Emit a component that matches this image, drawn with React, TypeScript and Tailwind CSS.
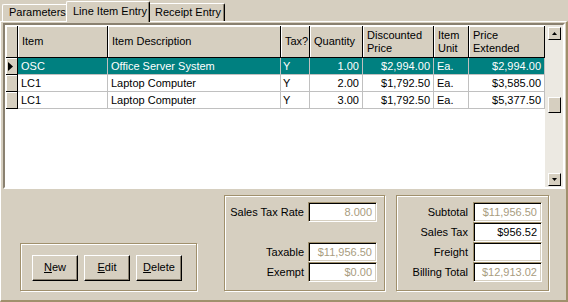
import React from 'react';

const rows = [
  { item: 'OSC', desc: 'Office Server System', tax: 'Y', qty: '1.00', price: '$2,994.00', unit: 'Ea.', ext: '$2,994.00' },
  { item: 'LC1', desc: 'Laptop Computer', tax: 'Y', qty: '2.00', price: '$1,792.50', unit: 'Ea.', ext: '$3,585.00' },
  { item: 'LC1', desc: 'Laptop Computer', tax: 'Y', qty: '3.00', price: '$1,792.50', unit: 'Ea.', ext: '$5,377.50' },
];

const hdrCell = 'h-full flex items-center pl-[4px] leading-[13px] border-r border-b border-black shadow-[inset_1px_1px_0_#fff] bg-[#d6cfc0]';
const cell = 'h-[17px] flex items-center px-[3px] border-r border-b border-[#c0c0c0] whitespace-nowrap';

const Field: React.FC<{ value?: string; disabled?: boolean }> = ({ value, disabled }) => (
  <div
    className={`w-[69px] h-[20px] bg-white flex items-center justify-end pr-[4px] border border-t-[#a0906c] border-l-[#a0906c] border-r-white border-b-white shadow-[inset_1px_1px_0_#000,inset_-1px_-1px_0_#d6cfc0] ${
      disabled ? 'text-[#a89c80]' : 'text-black'
    }`}
  >
    {value}
  </div>
);

const Btn: React.FC<{ k: string; rest: string }> = ({ k, rest }) => (
  <div className="w-[46px] h-[26px] flex items-center justify-center border border-t-white border-l-white border-r-black border-b-black shadow-[inset_-1px_-1px_0_#8a8170]">
    <span>
      <span className="underline">{k}</span>
      {rest}
    </span>
  </div>
);

const ArrowUp = () => (
  <svg width="5" height="3" viewBox="0 0 5 3"><path d="M2.5 0 L5 3 L0 3 Z" fill="#000" /></svg>
);
const ArrowDown = () => (
  <svg width="5" height="3" viewBox="0 0 5 3"><path d="M0 0 L5 0 L2.5 3 Z" fill="#000" /></svg>
);

const App: React.FC = () => {
  return (
    <div className="w-[568px] h-[302px] bg-[#d6cfc0] text-[11px] text-black overflow-hidden flex flex-col font-['Liberation_Sans',Arial,sans-serif]">
      {/* tabs */}
      <div className="h-[21px] flex items-end pl-[2px] shrink-0">
        <div className="w-[64px] h-[17px] border-t border-l border-white rounded-tl-[2px] pl-[6px] leading-[14px]">Parameters</div>
        <div className="relative z-10 -mb-px w-[84px] h-[21px] bg-[#d6cfc0] border-t border-l border-white border-r border-r-black rounded-t-[2px] pl-[6px] pt-[2px] leading-[14px] shadow-[inset_-1px_0_0_#8a8170]">
          Line Item Entry
        </div>
        <div className="w-[75px] h-[18px] border-t border-white border-r border-r-black rounded-tr-[2px] pl-[5px] pt-[1px] leading-[14px] shadow-[inset_-1px_0_0_#8a8170]">
          Receipt Entry
        </div>
      </div>

      {/* panel */}
      <div className="flex-1 flex flex-col border-t border-l border-white border-r-2 border-b-2 border-r-[#a0906c] border-b-[#a0906c] shadow-[1px_1px_0_#6b5e45]">
        {/* grid */}
        <div className="ml-[2px] mt-[1px] w-[562px] h-[166px] flex border-2 border-t-[#8a8170] border-l-[#8a8170] border-r-white border-b-white shadow-[inset_1px_1px_0_#000]">
          <div className="flex-1 bg-white pt-[1px] pl-[1px]">
            {/* header */}
            <div className="flex h-[32px]">
              <div className={`w-[12px] ${hdrCell}`} />
              <div className={`w-[90px] ${hdrCell}`}>Item</div>
              <div className={`w-[173px] ${hdrCell}`}>Item Description</div>
              <div className={`w-[29px] ${hdrCell} pl-[1px]`}>Tax?</div>
              <div className={`w-[53px] ${hdrCell} pl-[3px]`}>Quantity</div>
              <div className={`w-[71px] ${hdrCell}`}>Discounted<br />Price</div>
              <div className={`w-[35px] ${hdrCell} pl-[3px]`}>Item<br />Unit</div>
              <div className={`w-[76px] ${hdrCell}`}>Price<br />Extended</div>
            </div>
            {rows.map((r, i) => {
              const sel = i === 0;
              return (
                <div key={i} className={`flex ${sel ? 'bg-[#008080] text-white' : ''}`}>
                  <div className="w-[12px] h-[17px] bg-[#d6cfc0] text-black border-r border-b border-black shadow-[inset_1px_1px_0_#fff] flex items-center pl-[2px]">
                    {sel && (
                      <svg width="5" height="9" viewBox="0 0 5 9"><path d="M0 0 L5 4.5 L0 9 Z" fill="#000" /></svg>
                    )}
                  </div>
                  <div className={`w-[90px] ${cell}`}>{r.item}</div>
                  <div className={`w-[173px] ${cell}`}>{r.desc}</div>
                  <div className={`w-[29px] ${cell} pl-[2px]`}>{r.tax}</div>
                  <div className={`w-[53px] ${cell} justify-end`}>{r.qty}</div>
                  <div className={`w-[71px] ${cell} justify-end`}>{r.price}</div>
                  <div className={`w-[35px] ${cell}`}>{r.unit}</div>
                  <div className={`w-[76px] ${cell} justify-end`}>{r.ext}</div>
                </div>
              );
            })}
          </div>
          {/* scrollbar */}
          <div className="w-[18px] bg-[#ece9e2] flex flex-col pl-[3px] pt-[2px] pb-[1px]">
            <div className="w-[13px] h-[13px] bg-[#d6cfc0] flex items-center justify-center border border-t-white border-l-white border-r-black border-b-black">
              <ArrowUp />
            </div>
            <div className="mt-[57px] w-[13px] h-[16px] bg-[#d6cfc0] border border-t-white border-l-white border-r-black border-b-black" />
            <div className="mt-auto w-[13px] h-[13px] bg-[#d6cfc0] flex items-center justify-center border border-t-white border-l-white border-r-black border-b-black">
              <ArrowDown />
            </div>
          </div>
        </div>

        {/* bottom */}
        <div className="flex items-end pt-[6px] pl-[19px]">
          <div className="w-[177px] h-[48px] border border-[#a0906c] shadow-[inset_1px_1px_0_#fff,1px_1px_0_#fff] flex items-center gap-[6px] pl-[11px] pt-[1px]">
            <Btn k="N" rest="ew" />
            <Btn k="E" rest="dit" />
            <Btn k="D" rest="elete" />
          </div>

          <div className="ml-[27px] w-[161px] h-[96px] border border-[#a0906c] shadow-[inset_1px_1px_0_#fff,1px_1px_0_#fff] flex flex-col pt-[6px] pr-[7px]">
            <div className="flex items-center justify-end gap-[4px]">
              <span>Sales Tax Rate</span>
              <Field value="8.000" disabled />
            </div>
            <div className="mt-[20px] flex items-center justify-end gap-[4px]">
              <span>Taxable</span>
              <Field value="$11,956.50" disabled />
            </div>
            <div className="flex items-center justify-end gap-[4px]">
              <span>Exempt</span>
              <Field value="$0.00" disabled />
            </div>
          </div>

          <div className="ml-[11px] w-[153px] h-[96px] border border-[#a0906c] shadow-[inset_1px_1px_0_#fff,1px_1px_0_#fff] flex flex-col pt-[6px] pr-[6px]">
            <div className="flex items-center justify-end gap-[5px]">
              <span>Subtotal</span>
              <Field value="$11,956.50" disabled />
            </div>
            <div className="flex items-center justify-end gap-[5px]">
              <span>Sales Tax</span>
              <Field value="$956.52" />
            </div>
            <div className="flex items-center justify-end gap-[5px]">
              <span>Freight</span>
              <Field />
            </div>
            <div className="flex items-center justify-end gap-[5px]">
              <span>Billing Total</span>
              <Field value="$12,913.02" disabled />
            </div>
          </div>
        </div>
      </div>
    </div>
  );
};

export default App;
